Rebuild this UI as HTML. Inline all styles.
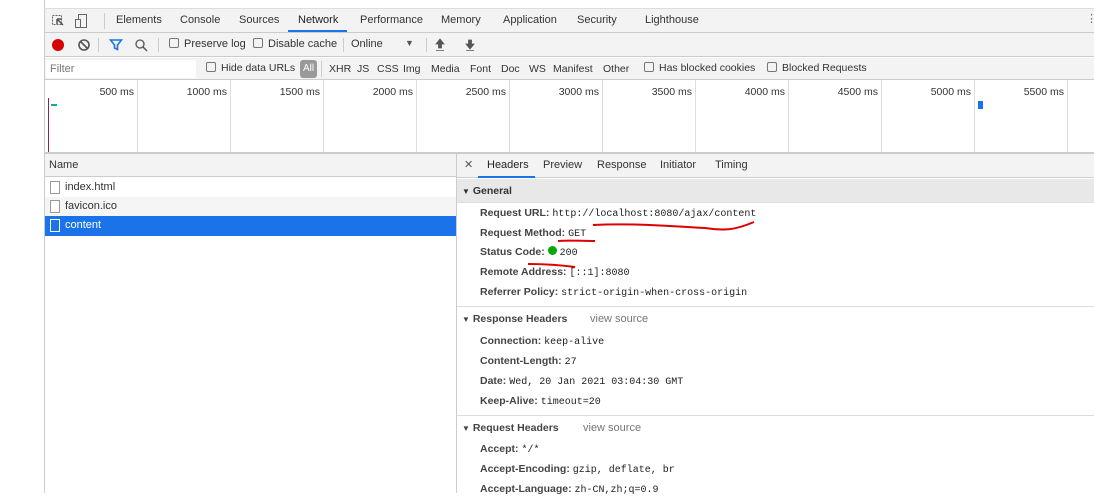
<!DOCTYPE html>
<html><head><style>
*{margin:0;padding:0;box-sizing:border-box}
body{width:1094px;height:493px;overflow:hidden;background:#fff;font-family:"Liberation Sans",sans-serif;font-size:11px;color:#333;position:relative}
.a{position:absolute;white-space:nowrap}
.mono{font-family:"Liberation Mono",monospace;font-size:10px;color:#222;font-weight:normal}
.k{color:#444;font-weight:bold;font-size:10.5px}
.cb{display:inline-block;width:10px;height:10px;border:1px solid #777;border-radius:2px;vertical-align:-1px;margin-right:5px}
.gl{position:absolute;top:80px;height:72px;width:1px;background:#ddd}
.tl{position:absolute;top:86px;font-size:10.5px;color:#333;text-align:right;width:80px}
.ft{position:absolute;top:63px;font-size:10.5px}
</style></head><body>
<div class="a" style="left:44px;top:0;width:1px;height:493px;background:#ccc"></div>
<div class="a" style="left:44px;top:8px;width:1050px;height:1px;background:#ddd"></div>
<div class="a" style="left:45px;top:9px;width:1049px;height:24px;background:#f3f3f3;border-bottom:1px solid #ccc"></div>
<svg class="a" style="left:51px;top:13px" width="44" height="16"><rect x="1.5" y="2.5" width="9" height="9" fill="none" stroke="#666" stroke-dasharray="2 1"/><path d="M6 6l6 6M6 6v5M6 6h5" stroke="#555" stroke-width="1.5" fill="none"/><rect x="27.5" y="1.5" width="8" height="13" fill="none" stroke="#666"/><rect x="24.5" y="6.5" width="5" height="8" fill="#f3f3f3" stroke="#666"/></svg>
<div class="a" style="left:104px;top:13px;width:1px;height:16px;background:#ccc"></div>
<div class="a" style="left:116px;top:14px">Elements</div>
<div class="a" style="left:180px;top:14px">Console</div>
<div class="a" style="left:239px;top:14px">Sources</div>
<div class="a" style="left:298px;top:14px;color:#222">Network</div>
<div class="a" style="left:288px;top:30px;width:59px;height:2px;background:#1a73e8"></div>
<div class="a" style="left:360px;top:14px">Performance</div>
<div class="a" style="left:441px;top:14px">Memory</div>
<div class="a" style="left:503px;top:14px">Application</div>
<div class="a" style="left:577px;top:14px">Security</div>
<div class="a" style="left:645px;top:14px">Lighthouse</div>
<div class="a" style="left:1086px;top:12px;color:#666">⋮</div>
<div class="a" style="left:45px;top:33px;width:1049px;height:24px;background:#f3f3f3;border-bottom:1px solid #ccc"></div>
<div class="a" style="left:52px;top:39px;width:12px;height:12px;border-radius:50%;background:#d50000"></div>
<svg class="a" style="left:77px;top:38px" width="14" height="14"><circle cx="7" cy="7" r="5" fill="none" stroke="#555" stroke-width="1.6"/><path d="M3.5 3.5l7 7" stroke="#555" stroke-width="1.6"/></svg>
<div class="a" style="left:98px;top:38px;width:1px;height:14px;background:#ccc"></div>
<svg class="a" style="left:109px;top:38px" width="14" height="14"><path d="M1.5 2h11l-4 5v4.5l-3-1.5v-3z" fill="none" stroke="#1a73e8" stroke-width="1.6"/></svg>
<svg class="a" style="left:134px;top:38px" width="14" height="14"><circle cx="6" cy="6" r="4" fill="none" stroke="#555" stroke-width="1.3"/><path d="M9 9l4 4" stroke="#555" stroke-width="1.4"/></svg>
<div class="a" style="left:158px;top:38px;width:1px;height:14px;background:#ccc"></div>
<div class="a" style="left:169px;top:38px"><span class="cb"></span>Preserve log</div>
<div class="a" style="left:253px;top:38px"><span class="cb"></span>Disable cache</div>
<div class="a" style="left:343px;top:38px;width:1px;height:14px;background:#ccc"></div>
<div class="a" style="left:351px;top:38px">Online</div>
<div class="a" style="left:405px;top:38px;font-size:9px;color:#555">▼</div>
<div class="a" style="left:426px;top:38px;width:1px;height:14px;background:#ccc"></div>
<svg class="a" style="left:435px;top:38px" width="40" height="14"><path d="M5 1l4 5H6.5v4h-3V6H1zM1 12.5h8M35 11l-4-5h2.5V2h3v4H39zM31 12.5h8" fill="#555" stroke="#555" stroke-width="0.8"/></svg>
<div class="a" style="left:45px;top:58px;width:1049px;height:22px;background:#f3f3f3;border-bottom:1px solid #ccc"></div>
<div class="a" style="left:46px;top:60px;width:150px;height:18px;background:#fff"></div>
<div class="a" style="left:50px;top:63px;color:#777">Filter</div>
<div class="a" style="left:206px;top:62px;font-size:10.5px"><span class="cb"></span>Hide data URLs</div>
<div class="a" style="left:300px;top:60px;width:17px;height:18px;background:#999;border-radius:3px;color:#fff;font-size:10px;text-align:center;line-height:18px">All</div>
<div class="a" style="left:321px;top:61px;width:1px;height:16px;background:#ccc"></div>
<div class="ft" style="left:329px">XHR</div><div class="ft" style="left:357px">JS</div><div class="ft" style="left:377px">CSS</div><div class="ft" style="left:403px">Img</div><div class="ft" style="left:431px">Media</div><div class="ft" style="left:470px">Font</div><div class="ft" style="left:501px">Doc</div><div class="ft" style="left:529px">WS</div><div class="ft" style="left:553px">Manifest</div><div class="ft" style="left:603px">Other</div>
<div class="a" style="left:644px;top:62px;font-size:10.5px"><span class="cb"></span>Has blocked cookies</div>
<div class="a" style="left:767px;top:62px;font-size:10.5px"><span class="cb"></span>Blocked Requests</div>
<div class="gl" style="left:137px"></div><div class="gl" style="left:230px"></div><div class="gl" style="left:323px"></div><div class="gl" style="left:416px"></div><div class="gl" style="left:509px"></div><div class="gl" style="left:602px"></div><div class="gl" style="left:695px"></div><div class="gl" style="left:788px"></div><div class="gl" style="left:881px"></div><div class="gl" style="left:974px"></div><div class="gl" style="left:1067px"></div>
<div class="tl" style="left:54px">500 ms</div><div class="tl" style="left:147px">1000 ms</div><div class="tl" style="left:240px">1500 ms</div><div class="tl" style="left:333px">2000 ms</div><div class="tl" style="left:426px">2500 ms</div><div class="tl" style="left:519px">3000 ms</div><div class="tl" style="left:612px">3500 ms</div><div class="tl" style="left:705px">4000 ms</div><div class="tl" style="left:798px">4500 ms</div><div class="tl" style="left:891px">5000 ms</div><div class="tl" style="left:984px">5500 ms</div>
<div class="a" style="left:48px;top:98px;width:1px;height:54px;background:#8b2252"></div>
<div class="a" style="left:51px;top:104px;width:6px;height:2px;background:#1aa"></div>
<div class="a" style="left:978px;top:101px;width:5px;height:8px;background:#1a73e8"></div>
<div class="a" style="left:45px;top:152px;width:1049px;height:2px;background:#ccc"></div>
<div class="a" style="left:45px;top:154px;width:411px;height:23px;background:#f3f3f3;border-bottom:1px solid #ccc"></div>
<div class="a" style="left:49px;top:159px">Name</div>
<div class="a" style="left:456px;top:154px;width:1px;height:339px;background:#ccc"></div>
<div class="a" style="left:50px;top:181px;width:10px;height:13px;border:1px solid #999;background:#fff"></div>
<div class="a" style="left:65px;top:181px">index.html</div>
<div class="a" style="left:45px;top:197px;width:411px;height:19px;background:#f5f5f5"></div>
<div class="a" style="left:50px;top:200px;width:10px;height:13px;border:1px solid #999;background:#fff"></div>
<div class="a" style="left:65px;top:200px">favicon.ico</div>
<div class="a" style="left:45px;top:216px;width:411px;height:20px;background:#1a73e8"></div>
<div class="a" style="left:50px;top:219px;width:10px;height:13px;border:1px solid #fff;background:#1a73e8"></div>
<div class="a" style="left:65px;top:219px;color:#fff">content</div>
<div class="a" style="left:457px;top:154px;width:637px;height:24px;background:#f3f3f3;border-bottom:1px solid #ccc"></div>
<div class="a" style="left:464px;top:158px;color:#555">✕</div>
<div class="a" style="left:487px;top:159px;color:#222">Headers</div>
<div class="a" style="left:478px;top:176px;width:57px;height:2px;background:#1a73e8"></div>
<div class="a" style="left:543px;top:159px">Preview</div>
<div class="a" style="left:597px;top:159px">Response</div>
<div class="a" style="left:660px;top:159px">Initiator</div>
<div class="a" style="left:715px;top:159px">Timing</div>
<div class="a" style="left:457px;top:179px;width:637px;height:24px;background:#e8e8e8;border-bottom:1px solid #ddd"></div>
<div class="a k" style="left:462px;top:185px;color:#333"><span style="font-size:8px">▼</span> General</div>
<div class="a k" style="left:480px;top:207px">Request URL: <span class="mono">http://localhost:8080/ajax/content</span></div>
<div class="a k" style="left:480px;top:227px">Request Method: <span class="mono">GET</span></div>
<div class="a k" style="left:480px;top:246px">Status Code: <span style="display:inline-block;width:9px;height:9px;border-radius:50%;background:#0a0;vertical-align:0"></span> <span class="mono">200</span></div>
<div class="a k" style="left:480px;top:266px">Remote Address: <span class="mono">[::1]:8080</span></div>
<div class="a k" style="left:480px;top:286px">Referrer Policy: <span class="mono">strict-origin-when-cross-origin</span></div>
<svg class="a" style="left:520px;top:210px" width="260" height="60"><path d="M73 15C110 13 150 16 185 18 205 21 215 20 234 12M38 31C50 30 62 31 75 31M8 54C22 54 40 55 55 57" fill="none" stroke="#d00" stroke-width="2"/></svg>
<div class="a" style="left:457px;top:306px;width:637px;height:1px;background:#ddd"></div>
<div class="a k" style="left:462px;top:313px"><span style="font-size:8px">▼</span> Response Headers</div>
<div class="a" style="left:590px;top:313px;color:#777">view source</div>
<div class="a k" style="left:480px;top:335px">Connection: <span class="mono">keep-alive</span></div>
<div class="a k" style="left:480px;top:355px">Content-Length: <span class="mono">27</span></div>
<div class="a k" style="left:480px;top:375px">Date: <span class="mono">Wed, 20 Jan 2021 03:04:30 GMT</span></div>
<div class="a k" style="left:480px;top:395px">Keep-Alive: <span class="mono">timeout=20</span></div>
<div class="a" style="left:457px;top:415px;width:637px;height:1px;background:#ddd"></div>
<div class="a k" style="left:462px;top:422px"><span style="font-size:8px">▼</span> Request Headers</div>
<div class="a" style="left:583px;top:422px;color:#777">view source</div>
<div class="a k" style="left:480px;top:443px">Accept: <span class="mono">*/*</span></div>
<div class="a k" style="left:480px;top:463px">Accept-Encoding: <span class="mono">gzip, deflate, br</span></div>
<div class="a k" style="left:480px;top:483px">Accept-Language: <span class="mono">zh-CN,zh;q=0.9</span></div>
</body></html>
